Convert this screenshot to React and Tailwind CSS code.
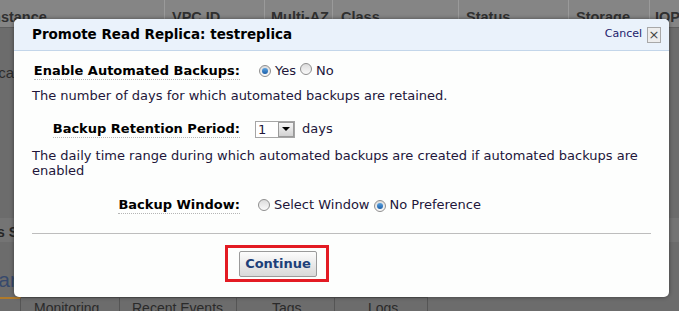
import React from "react";

const Radio = ({ checked }) => (
  <span className="inline-flex items-center justify-center w-[12px] h-[12px] rounded-full border border-[#8f8f8f] bg-gradient-to-b from-[#dcdcdc] to-[#fafafa] shrink-0">
    {checked && (
      <span className="w-[6px] h-[6px] rounded-full bg-gradient-to-b from-[#5aa3e0] to-[#1a5ea8]" />
    )}
  </span>
);

const Label = ({ children }) => (
  <div className="w-[208px] flex justify-end shrink-0">
    <span className="font-bold text-black border-b border-dotted border-[#b5b5b5] leading-[16px]">
      {children}
    </span>
  </div>
);

// text pinned to end at a given x, the rest runs off to the left
const EdgeText = ({ w, children }) => (
  <div className={`${w} flex justify-end whitespace-nowrap`}>{children}</div>
);

const App = () => {
  return (
    <div className="relative w-[679px] h-[311px] overflow-hidden bg-[#6c6c6c] font-['Liberation_Sans',sans-serif]">
      {/* page behind the overlay */}
      <div className="flex h-[28px] bg-[#858585] border-b border-[#5e5e5e] text-[14.5px] font-bold text-[#303030] whitespace-nowrap">
        <div className="w-[165px] border-r border-[#9a9a9a] pt-[7px] overflow-hidden">
          <span className="ml-[-12px]">Instance</span>
        </div>
        <div className="w-[100px] border-r border-[#9a9a9a] pt-[7px] pl-[7px] overflow-hidden">VPC ID</div>
        <div className="w-[68px] border-r border-[#9a9a9a] pt-[7px] pl-[6px] overflow-hidden">Multi-AZ</div>
        <div className="w-[126px] border-r border-[#9a9a9a] pt-[7px] pl-[8px] overflow-hidden">Class</div>
        <div className="w-[110px] border-r border-[#9a9a9a] pt-[7px] pl-[7px] overflow-hidden">Status</div>
        <div className="w-[81px] border-r border-[#9a9a9a] pt-[7px] pl-[7px] overflow-hidden">Storage</div>
        <div className="flex-1 pt-[7px] pl-[5px] overflow-hidden">IOPS</div>
      </div>
      <div className="h-[190px] pt-[34px] text-[15px] text-[#2c2c2c]">
        <EdgeText w="w-[14px]">testreplica</EdgeText>
      </div>
      <div className="h-[24px] bg-[#747474] text-[14px] font-bold text-[#262626] pt-[4px]">
        <EdgeText w="w-[18px]">Details S</EdgeText>
      </div>
      <div className="h-[55px] pt-[22px] text-[21px] text-[#36496c]">
        <EdgeText w="w-[17px]">Replicar</EdgeText>
      </div>
      <div className="flex h-[14px] text-[14px] text-[#2a2a2a] whitespace-nowrap">
        <div className="w-[21px] border-r border-t-2 border-[#555] border-t-[#b07a2a]" />
        <div className="w-[99px] border-r border-t border-[#555] pl-[13px]">Monitoring</div>
        <div className="w-[117px] border-r border-t border-[#555] pl-[12px]">Recent Events</div>
        <div className="w-[98px] border-r border-t border-[#555] pl-[35px]">Tags</div>
        <div className="w-[93px] border-r border-t border-[#555] pl-[33px]">Logs</div>
      </div>

      {/* modal */}
      <div className="absolute left-[14px] top-[19px] w-[655px] h-[278px] rounded-[5px] bg-[#fdfefd] overflow-hidden shadow-[0_0_4px_rgba(0,0,0,0.45)] font-['DejaVu_Sans',sans-serif]">
        <div className="h-[32px] bg-[#eaf2fb] border-b border-[#c3d6ea] flex items-center justify-between pl-[18px] pr-[8px]">
          <div className="text-[13.5px] font-bold text-black">Promote Read Replica: testreplica</div>
          <div className="flex items-center gap-[5px]">
            <span className="text-[11px] text-[#1b1b6b]">Cancel</span>
            <span className="w-[14px] h-[16px] flex items-center justify-center border border-[#a8a8a8] bg-[#ededed] text-[13px] leading-none text-[#444]">
              ×
            </span>
          </div>
        </div>

        <div className="px-[18px] text-[13px] text-[#22163a]">
          <div className="flex items-center h-[20px] mt-[10px]">
            <Label>Enable Automated Backups:</Label>
            <div className="flex items-center ml-[19px]">
              <Radio checked />
              <span className="ml-[4px]">Yes</span>
              <span className="ml-[4px]"><Radio /></span>
              <span className="ml-[4px]">No</span>
            </div>
          </div>

          <div className="mt-[7px] leading-[15px]">
            The number of days for which automated backups are retained.
          </div>

          <div className="flex items-center h-[20px] mt-[16px]">
            <Label>Backup Retention Period:</Label>
            <div className="flex items-center ml-[15px]">
              <div className="flex items-center w-[40px] h-[17px] border border-[#a5a5a5] bg-white">
                <span className="flex-1 pl-[2px] leading-none">1</span>
                <span className="w-[16px] h-[15px] flex items-center justify-center border border-[#9a9a9a] bg-gradient-to-b from-[#f6f6f6] to-[#d2d2d2]">
                  <span className="w-0 h-0 border-l-[4px] border-r-[4px] border-t-[4px] border-l-transparent border-r-transparent border-t-black" />
                </span>
              </div>
              <span className="ml-[7px]">days</span>
            </div>
          </div>

          <div className="mt-[9px] leading-[15px]">
            The daily time range during which automated backups are created if automated backups are enabled
          </div>

          <div className="flex items-center h-[20px] mt-[17px]">
            <Label>Backup Window:</Label>
            <div className="flex items-center ml-[18px]">
              <Radio />
              <span className="ml-[4px]">Select Window</span>
              <span className="ml-[4px]"><Radio checked /></span>
              <span className="ml-[4px]">No Preference</span>
            </div>
          </div>

          <div className="mt-[18px] h-px bg-[#bdbdbd]" />

          <div className="mt-[11px] ml-[193px] w-[104px] h-[37px] border-[3px] border-[#e31b23] pl-[11px] pt-[3px]">
            <button className="w-[78px] h-[26px] rounded-[2px] border border-[#9a9a9a] bg-gradient-to-b from-[#fcfcfc] to-[#d9d9d9] text-[13px] font-bold text-[#1d3f79]">
              Continue
            </button>
          </div>
        </div>
      </div>
    </div>
  );
};

export default App;
